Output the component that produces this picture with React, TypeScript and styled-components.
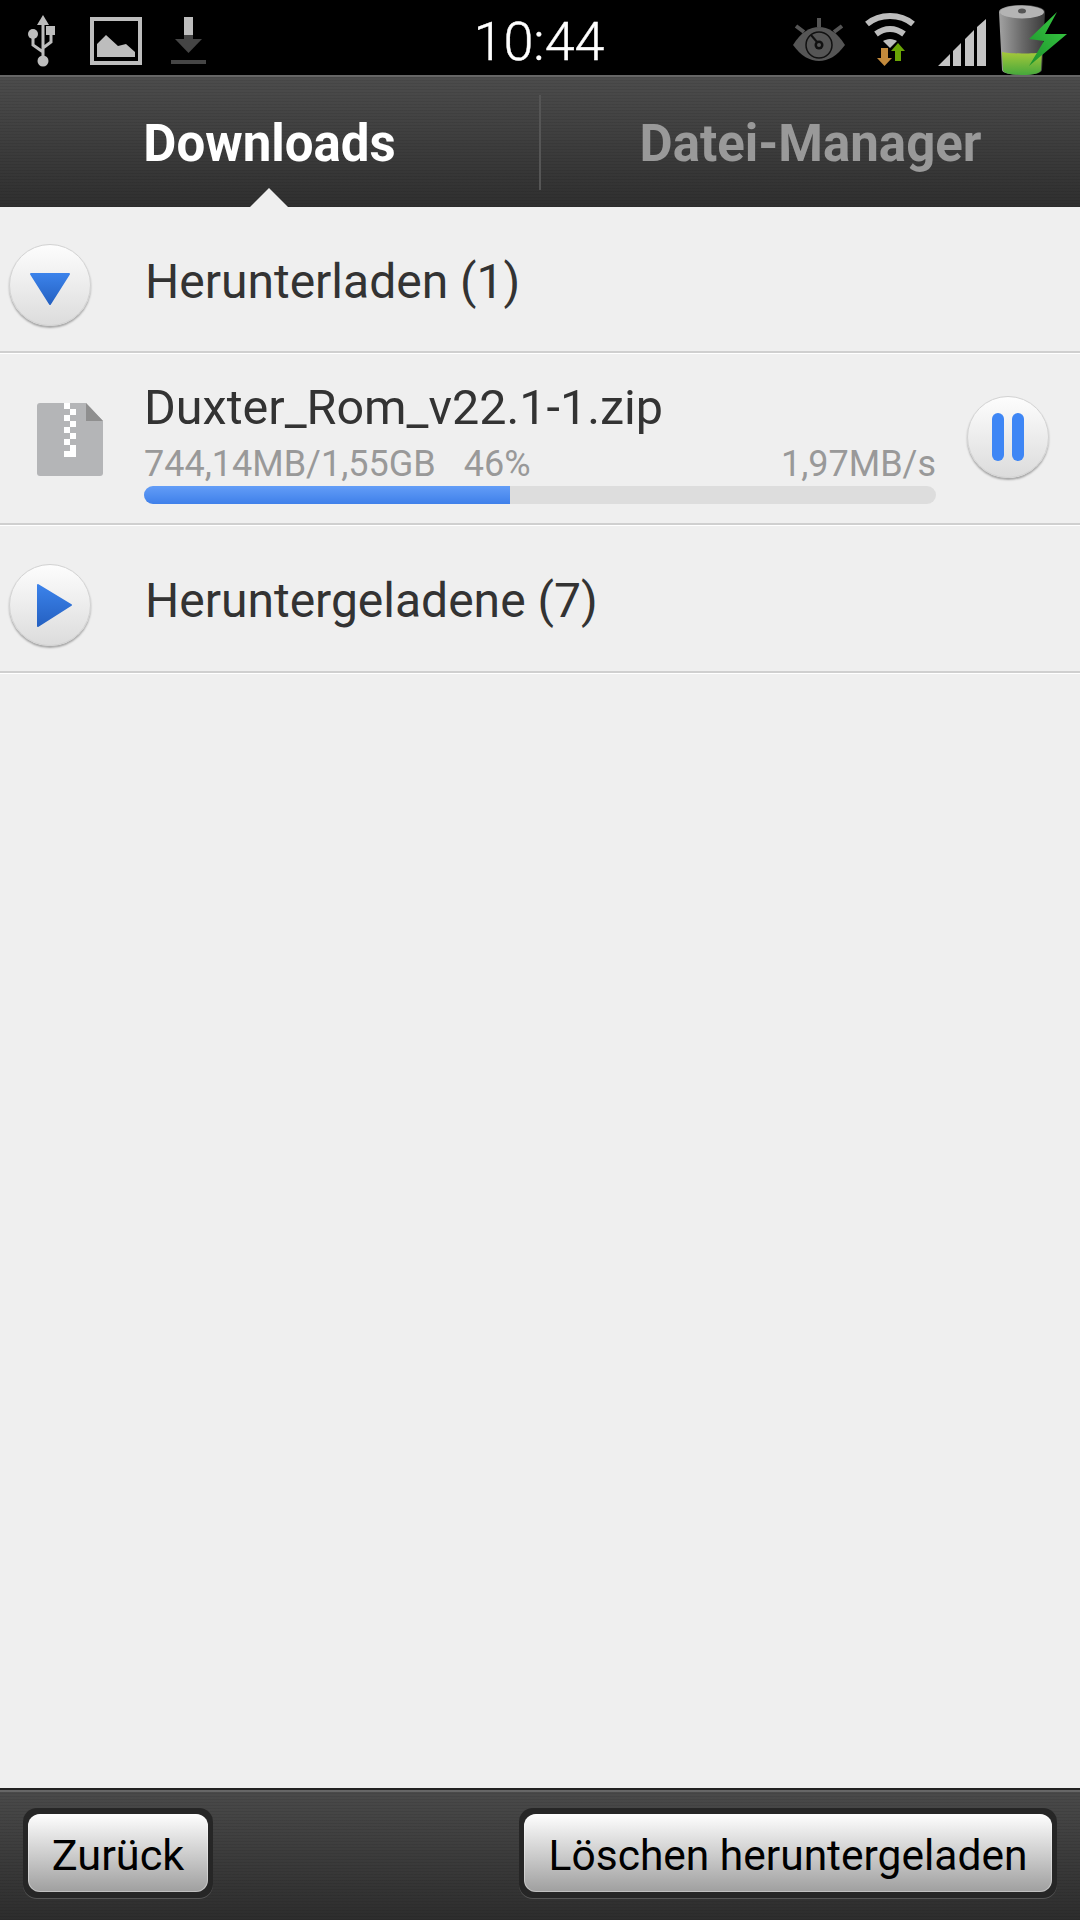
import styled, { createGlobalStyle } from "styled-components";

const GlobalStyle = createGlobalStyle`
  html, body {
    margin: 0;
    padding: 0;
    background: #efefef;
  }
  * {
    box-sizing: border-box;
  }
`;

const scanlines = `repeating-linear-gradient(180deg, rgba(0, 0, 0, 0.07) 0 1px, transparent 1px 3px)`;

const Screen = styled.div`
  width: 1080px;
  height: 1920px;
  display: flex;
  flex-direction: column;
  overflow: hidden;
  font-family: Roboto, "Liberation Sans", sans-serif;
  background: #efefef;
`;

const StatusBar = styled.div`
  height: 75px;
  flex: none;
  display: grid;
  grid-template-columns: 1fr auto 1fr;
  align-items: center;
  background: #000;
`;

const IconGroup = styled.div<{ $end?: boolean }>`
  display: flex;
  align-items: flex-start;
  height: 75px;
  justify-content: ${(p) => (p.$end ? "flex-end" : "flex-start")};
  padding: ${(p) => (p.$end ? "0 12px 0 0" : "0 0 0 28px")};
`;

const StatusIcon = styled.svg<{ $top: number; $left?: number }>`
  display: block;
  flex: none;
  margin-top: ${(p) => p.$top}px;
  margin-left: ${(p) => p.$left ?? 0}px;
`;

const SoftStatusIcon = styled(StatusIcon)`
  filter: blur(0.6px);
`;

const Clock = styled.div`
  color: #fff;
  font-size: 54px;
  font-weight: 300;
  -webkit-text-stroke: 0.4px #fff;
  line-height: 75px;
  margin-top: 4px;
  margin-left: -2px;
  height: 75px;
`;

const Tabs = styled.div`
  position: relative;
  height: 132px;
  flex: none;
  display: flex;
  align-items: center;
  border-top: 2px solid #666;
  background: ${scanlines}, linear-gradient(180deg, #4c4c4c, #2f2f2f);
`;

const Tab = styled.div<{ $active?: boolean }>`
  position: relative;
  flex: 1;
  height: 95px;
  padding-top: 2px;
  display: flex;
  align-items: center;
  justify-content: center;
  font-size: 51px;
  font-weight: 700;
  color: ${(p) => (p.$active ? "#fff" : "#999")};
  & + & {
    border-left: 2px solid #555;
  }
`;

const TabPointer = styled.div`
  position: absolute;
  left: 250px;
  bottom: 0;
  width: 0;
  height: 0;
  border-left: 19px solid transparent;
  border-right: 19px solid transparent;
  border-bottom: 19px solid #efefef;
`;

const List = styled.div`
  flex: 1;
  display: flex;
  flex-direction: column;
`;

const Row = styled.div<{ $height: number }>`
  height: ${(p) => p.$height}px;
  flex: none;
  display: flex;
  align-items: center;
  border-bottom: 2px solid #cfcfcf;
  box-shadow: 0 1px 0 #fff;
`;

const GroupRow = styled(Row)`
  padding-left: 9px;
  gap: 54px;
`;

const DownloadRow = styled(Row)`
  padding: 0 31px 0 37px;
`;

const CircleButton = styled.div<{ $nudge?: number }>`
  width: 82px;
  height: 82px;
  flex: none;
  margin-top: ${(p) => p.$nudge ?? 0}px;
  display: flex;
  align-items: center;
  justify-content: center;
  gap: 8px;
  border-radius: 50%;
  border: 1px solid #d2d2d2;
  background: linear-gradient(180deg, #fdfdfd, #dcdcdc);
  box-shadow: 0 2px 2px rgba(0, 0, 0, 0.3);
`;

const PauseBar = styled.div`
  width: 12px;
  height: 48px;
  border-radius: 6px;
  background: #3e86f5;
`;

const RowTitle = styled.div`
  font-size: 48px;
  line-height: 54px;
  color: #333;
`;

const GroupTitle = styled(RowTitle)`
  margin-top: 5px;
`;

const FileName = styled(RowTitle)`
  font-size: 48.500px;
`;

const DownloadBody = styled.div`
  flex: 1;
  margin: 0 31px 0 40px;
  padding-top: 9px;
  display: flex;
  flex-direction: column;
`;

const Meta = styled.div`
  display: flex;
  justify-content: space-between;
  font-size: 36px;
  line-height: 40px;
  margin-top: 9px;
  color: #999;
`;

const MetaLeft = styled.div`
  display: flex;
  gap: 28px;
`;

const Track = styled.div`
  height: 18px;
  margin-top: 2px;
  border-radius: 9px;
  background: #ddd;
  overflow: hidden;
`;

const Fill = styled.div<{ $value: number }>`
  height: 100%;
  width: ${(p) => p.$value}%;
  background: linear-gradient(180deg, #639df7, #3f80ea);
`;

const BottomBar = styled.div`
  height: 132px;
  flex: none;
  display: flex;
  align-items: center;
  justify-content: space-between;
  padding: 0 23px 4px;
  border-top: 2px solid #222;
  box-shadow: inset 0 2px 0 #666;
  background: ${scanlines}, linear-gradient(180deg, #4a4a4a, #2d2d2d);
`;

const Well = styled.div`
  padding: 6px 5px;
  border-radius: 14px;
  background: #262626;
  box-shadow: 0 1px 0 #555;
`;

const Button = styled.button<{ $width: number; $size: number }>`
  display: block;
  width: ${(p) => p.$width}px;
  height: 78px;
  padding: 4px 0 0;
  border: 0;
  border-radius: 12px;
  font-family: inherit;
  font-size: ${(p) => p.$size}px;
  color: #000;
  background: linear-gradient(180deg, #fefefe, #9f9f9f);
  box-shadow: inset 0 0 0 1px rgba(255, 255, 255, 0.35);
`;

const ZipGlyph = styled.svg`
  flex: none;
  margin-top: 2px;
`;

function UsbIcon() {
  return (
    <StatusIcon $top={13} width="31" height="52" viewBox="0 0 31 52" fill="none">
      <path d="M15 0l6 10H9z" fill="#bdbdbd" />
      <path d="M15 9v36M5 22v8l10 7M23 18v9l-8 6" stroke="#bdbdbd" strokeWidth="3" />
      <circle cx="15" cy="46" r="5.5" fill="#bdbdbd" />
      <circle cx="5" cy="19" r="5" fill="#bdbdbd" />
      <rect x="18" y="11" width="9" height="9" fill="#bdbdbd" />
    </StatusIcon>
  );
}

function PictureIcon() {
  return (
    <StatusIcon $top={15} $left={31} width="52" height="48" viewBox="0 0 52 48" fill="none">
      <rect x="2" y="2" width="48" height="44" stroke="#bdbdbd" strokeWidth="4" />
      <path d="M7 40V27l9-9 12 11 8-2 9 8v5z" fill="#bdbdbd" />
    </StatusIcon>
  );
}

function DownloadIcon() {
  return (
    <StatusIcon $top={15} $left={29} width="35" height="47" viewBox="0 0 35 47">
      <rect x="13" width="9" height="18" fill="#bdbdbd" />
      <rect x="13" y="18" width="9" height="5" fill="#454545" />
      <path d="M4 22h27L17.5 36z" fill="#454545" />
      <rect y="43" width="35" height="4" fill="#454545" />
    </StatusIcon>
  );
}

function EyeIcon() {
  return (
    <StatusIcon $top={16} width="52" height="43" viewBox="0 0 52 43" fill="none">
      <path d="M26 0v9M3 8l8 6M49 8l-8 6" stroke="#555" strokeWidth="4" />
      <path d="M0 27C8 14 17 9 26 9s18 5 26 18c-8 11-17 16-26 16S8 38 0 27z" fill="#555" />
      <circle cx="26" cy="27" r="13" fill="none" stroke="#111" strokeWidth="1.5" />
      <circle cx="26" cy="27" r="4.5" fill="#111" />
      <circle cx="26" cy="27" r="2" fill="#555" />
      <path d="M24 24l-6-7" stroke="#111" strokeWidth="2" />
    </StatusIcon>
  );
}

function WifiIcon() {
  return (
    <StatusIcon $top={11} $left={19} width="52" height="53" viewBox="0 0 52 53" fill="none">
      <path d="M3 11C9 6 17 3 26 3s17 3 23 8" stroke="#bdbdbd" strokeWidth="6" />
      <path d="M12 21c4-3 9-5 14-5s10 2 14 5" stroke="#bdbdbd" strokeWidth="6" />
      <path d="M19 28c2-1 4-2 7-2s5 1 7 2l-7 7z" fill="#bdbdbd" />
      <path d="M17 35h7v10h4L20.500 53 13 45h4z" fill="#c38a3c" />
      <path d="M34 30l7 8h-4v10h-6V38h-4z" fill="#6aa405" />
    </StatusIcon>
  );
}

function SignalIcon() {
  return (
    <StatusIcon $top={17} $left={22} width="48" height="47" viewBox="0 0 48 47">
      <path d="M0 47l12-12v12zM15 32l8-8v23h-8zM27 20l9-9v36h-9zM39 8l9-8v47h-9z" fill="#c4c4c4" />
    </StatusIcon>
  );
}

function BatteryIcon() {
  return (
    <SoftStatusIcon $top={2} $left={12} width="70" height="72" viewBox="0 0 70 72">
      <defs>
        <linearGradient id="shell" x1="0" x2="1" y1="0" y2="0">
          <stop offset="0" stopColor="#a2a2a2" />
          <stop offset="0.5" stopColor="#6a6a6a" />
          <stop offset="1" stopColor="#3a3a3a" />
        </linearGradient>
        <linearGradient id="charge" x1="0" x2="0" y1="0" y2="1">
          <stop offset="0" stopColor="#a6c83a" />
          <stop offset="1" stopColor="#46a83c" />
        </linearGradient>
        <linearGradient id="bolt" x1="0" x2="1" y1="1" y2="0">
          <stop offset="0" stopColor="#1c8f2c" />
          <stop offset="1" stopColor="#3ad044" />
        </linearGradient>
      </defs>
      <path d="M1 8c0-4 10-7 23-7s23 3 23 7l-3 58c0 3-9 5-20 5S4 69 4 66z" fill="url(#shell)" />
      <ellipse cx="24" cy="8" rx="22" ry="6.500" fill="#b4b4b4" />
      <ellipse cx="24" cy="7" rx="4" ry="2.500" fill="#555" />
      <path d="M4 48c6 2 34 2 40 0l-1 18c0 3-8 5-19 5S5 69 5 66z" fill="url(#charge)" />
      <path d="M59 8L31 35l15 2-15 25 38-32H47z" fill="url(#bolt)" />
    </SoftStatusIcon>
  );
}

function ZipIcon() {
  const teeth = [0, 6, 12, 18, 24, 30, 36, 42];
  return (
    <ZipGlyph width="67" height="73" viewBox="0 0 67 73">
      <path d="M3 0h46l17 18v52a3 3 0 0 1-3 3H3a3 3 0 0 1-3-3V3a3 3 0 0 1 3-3z" fill="#b4b5b7" />
      <path d="M49 0l17 18H49z" fill="#8f8f8f" />
      {teeth.map((y, i) => (
        <rect key={y} x={i % 2 ? 33 : 27} y={y} width="6" height="6" fill="#fff" />
      ))}
      <rect x="27" y="48" width="12" height="6" fill="#fff" />
    </ZipGlyph>
  );
}

function Arrow({ points }: { points: string }) {
  return (
    <svg width="78" height="78" viewBox="0 0 78 78">
      <defs>
        <linearGradient id="blue" x1="0" x2="0" y1="0" y2="1">
          <stop offset="0" stopColor="#3b82ea" />
          <stop offset="1" stopColor="#2561c2" />
        </linearGradient>
      </defs>
      <polygon points={points} fill="url(#blue)" stroke="url(#blue)" strokeWidth="2" strokeLinejoin="round" />
    </svg>
  );
}

export default function App() {
  return (
    <Screen>
      <GlobalStyle />
      <StatusBar>
        <IconGroup>
          <UsbIcon />
          <PictureIcon />
          <DownloadIcon />
        </IconGroup>
        <Clock>10:44</Clock>
        <IconGroup $end>
          <EyeIcon />
          <WifiIcon />
          <SignalIcon />
          <BatteryIcon />
        </IconGroup>
      </StatusBar>
      <Tabs>
        <Tab $active>Downloads</Tab>
        <Tab>Datei-Manager</Tab>
        <TabPointer />
      </Tabs>
      <List>
        <GroupRow $height={146}>
          <CircleButton $nudge={12}>
            <Arrow points="20,28 58,28 39,58" />
          </CircleButton>
          <GroupTitle>Herunterladen (1)</GroupTitle>
        </GroupRow>
        <DownloadRow $height={172}>
          <ZipIcon />
          <DownloadBody>
            <FileName>Duxter_Rom_v22.1-1.zip</FileName>
            <Meta>
              <MetaLeft>
                <span>744,14MB/1,55GB</span>
                <span>46%</span>
              </MetaLeft>
              <span>1,97MB/s</span>
            </Meta>
            <Track>
              <Fill $value={46.2} />
            </Track>
          </DownloadBody>
          <CircleButton $nudge={-3}>
            <PauseBar />
            <PauseBar />
          </CircleButton>
        </DownloadRow>
        <GroupRow $height={148}>
          <CircleButton $nudge={14}>
            <Arrow points="27,19 60,39 27,60" />
          </CircleButton>
          <GroupTitle>Heruntergeladene (7)</GroupTitle>
        </GroupRow>
      </List>
      <BottomBar>
        <Well>
          <Button $width={180} $size={43.3}>
            Zurück
          </Button>
        </Well>
        <Well>
          <Button $width={528} $size={42.5}>
            Löschen heruntergeladen
          </Button>
        </Well>
      </BottomBar>
    </Screen>
  );
}
